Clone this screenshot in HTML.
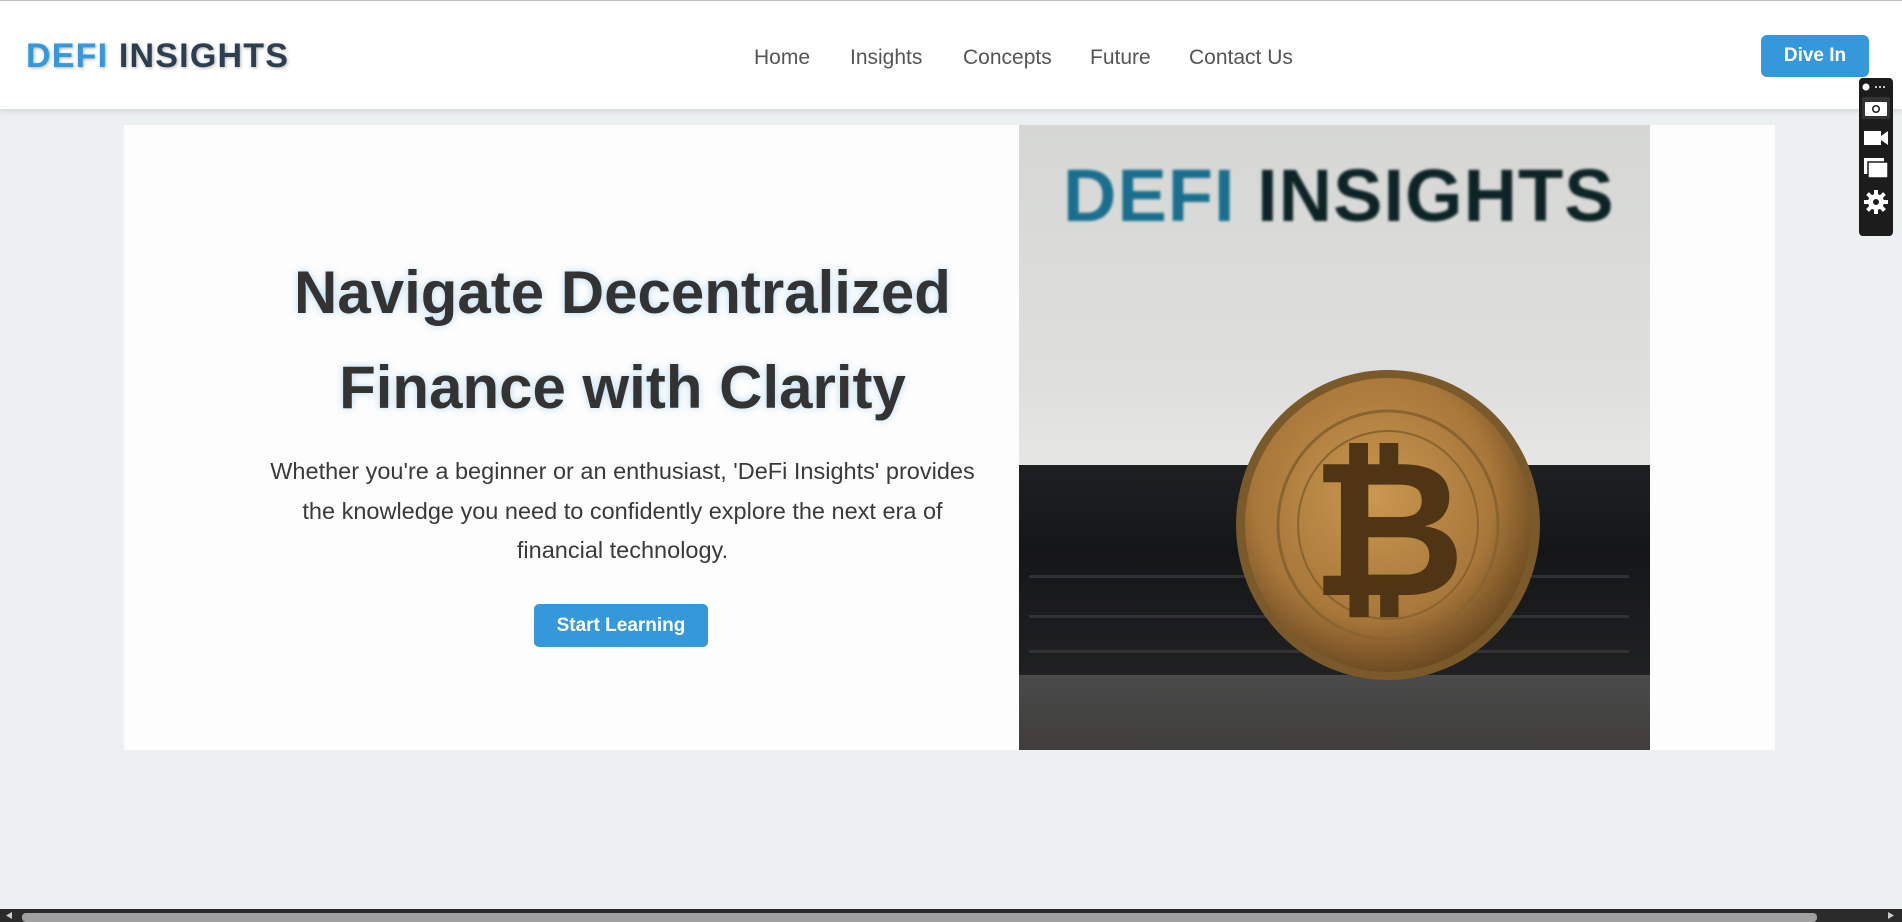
<!DOCTYPE html>
<html><head><meta charset="utf-8"><style>
*{margin:0;padding:0;box-sizing:border-box}
html,body{width:1902px;height:922px;overflow:hidden;background:#ecf0f1;font-family:"Liberation Sans",sans-serif}
.hdr{position:absolute;left:0;top:0;width:1902px;height:109px;background:#fff;border-top:1px solid #bbb;box-shadow:0 2px 6px rgba(0,0,0,.12)}
.logo{position:absolute;left:26px;top:36px;font-size:34px;font-weight:bold;letter-spacing:1.2px;color:#2c3e50;text-shadow:1px 1px 3px rgba(0,0,0,.3)}
.logo span{color:#3498db}
.nav a{position:absolute;top:45px;font-size:21px;color:#555;text-decoration:none}
.dive{position:absolute;left:1761px;top:34px;width:108px;height:42px;background:#3498db;border-radius:6px;color:#fff;font-weight:bold;font-size:19px;text-align:center;line-height:42px}
.card{position:absolute;left:124px;top:125px;width:1651px;height:625px;background:#fdfdfd}
h1{position:absolute;text-align:center;font-size:60px;line-height:95px;color:#333;font-weight:bold;text-shadow:0 0 8px rgba(52,152,219,.35)}
p{position:absolute;text-align:center;font-size:23.5px;line-height:39.5px;color:#3a3a3a}
.start{position:absolute;width:174px;height:43px;background:#3498db;border-radius:5px;color:#fff;font-weight:bold;font-size:19px;text-align:center;line-height:43px}
.img{position:absolute;left:1019px;top:125px;width:631px;height:625px;overflow:hidden;background:linear-gradient(180deg,#d6d7d5 0%,#dedfdd 40%,#e6e6e4 55%)}
.kb{position:absolute;left:0;top:340px;width:631px;height:210px;background:linear-gradient(180deg,#1f2021 0%,#151617 40%,#202122 100%)}
.base{position:absolute;left:0;top:550px;width:631px;height:75px;background:linear-gradient(180deg,#4a4a4a,#3f3e3c)}
.itext{position:absolute;left:44px;top:28px;font-size:74px;font-weight:bold;color:#0d2426;filter:blur(1.3px);letter-spacing:1px}
.itext span{color:#1a6f8f}
.tb{position:absolute;left:1859px;top:78px;width:34px;height:158px;background:#1c1c1c;border-radius:4px}
.sb{position:absolute;left:0;top:909px;width:1902px;height:13px;background:#2b2b2b}
.th{position:absolute;left:22px;top:913px;width:1795px;height:9px;background:#a0a0a0;border-radius:4px}
</style></head><body>
<div class="hdr">
<div class="logo"><span>DEFI</span> INSIGHTS</div>
<div class="nav">
<a style="left:754px">Home</a><a style="left:850px">Insights</a><a style="left:963px">Concepts</a><a style="left:1090px">Future</a><a style="left:1189px">Contact Us</a>
</div>
<div class="dive">Dive In</div>
</div>
<div class="card">
<h1 style="left:76px;width:845px;top:120px">Navigate Decentralized<br>Finance with Clarity</h1>
<p style="left:136px;width:725px;top:327px">Whether you're a beginner or an enthusiast, 'DeFi Insights' provides the knowledge you need to confidently explore the next era of financial technology.</p>
<div class="start" style="left:410px;top:479px">Start Learning</div>
</div>
<div class="img">
<div class="itext"><span>DEFI</span> INSIGHTS</div>
<div class="kb">
<svg width="631" height="210" style="position:absolute;left:0;top:0"><g fill="#3a3b3c" opacity=".7">
<rect x="10" y="110" width="600" height="3"/><rect x="10" y="150" width="600" height="3"/><rect x="10" y="185" width="600" height="3"/>
</g></svg>
</div>
<div class="base"></div>
<svg width="631" height="625" style="position:absolute;left:0;top:0">
<defs><radialGradient id="g" cx="45%" cy="40%" r="60%"><stop offset="0" stop-color="#c9974f"/><stop offset=".7" stop-color="#a8773a"/><stop offset="1" stop-color="#6e4c22"/></radialGradient></defs>
<ellipse cx="369" cy="400" rx="152" ry="155" fill="#7a5a2a"/>
<ellipse cx="369" cy="400" rx="143" ry="147" fill="url(#g)"/>
<ellipse cx="369" cy="400" rx="110" ry="114" fill="none" stroke="#8a6430" stroke-width="3"/>
<ellipse cx="369" cy="400" rx="90" ry="94" fill="none" stroke="#8a6430" stroke-width="2"/>
<text x="369" y="470" text-anchor="middle" font-family="Liberation Sans" font-weight="bold" font-size="190" fill="#4f3514">₿</text>
</svg>
</div>
<div class="tb">
<svg width="34" height="158"><g fill="#fff">
<circle cx="7" cy="9" r="3.5"/><circle cx="17" cy="9" r="1"/><circle cx="21" cy="9" r="1"/><circle cx="25" cy="9" r="1"/>
<rect x="3" y="19" width="28" height="22" fill="#333"/>
<rect x="6" y="24" width="22" height="14" rx="1"/><circle cx="17" cy="31" r="4" fill="#1c1c1c"/><circle cx="17" cy="31" r="2.5"/>
<rect x="5" y="53" width="17" height="14"/><path d="M22 58 L29 53 L29 67 L22 62Z"/>
<rect x="5" y="80" width="20" height="16"/><rect x="9" y="84" width="20" height="16" stroke="#1c1c1c" stroke-width="1.5"/>
<circle cx="17" cy="124" r="8"/>
<rect x="15" y="112" width="4" height="24"/><rect x="5" y="122" width="24" height="4"/>
<rect x="15" y="112" width="4" height="24" transform="rotate(45 17 124)"/><rect x="15" y="112" width="4" height="24" transform="rotate(-45 17 124)"/>
<circle cx="17" cy="124" r="3" fill="#1c1c1c"/>
</g></svg>
</div>
<div class="sb"></div><div class="th"></div>
<svg width="22" height="13" style="position:absolute;left:0;top:909px"><path d="M12 3 L6 6.5 L12 10Z" fill="#ccc"/></svg>
<svg width="22" height="13" style="position:absolute;left:1880px;top:909px"><path d="M8 3 L14 6.5 L8 10Z" fill="#ccc"/></svg>
</body></html>
